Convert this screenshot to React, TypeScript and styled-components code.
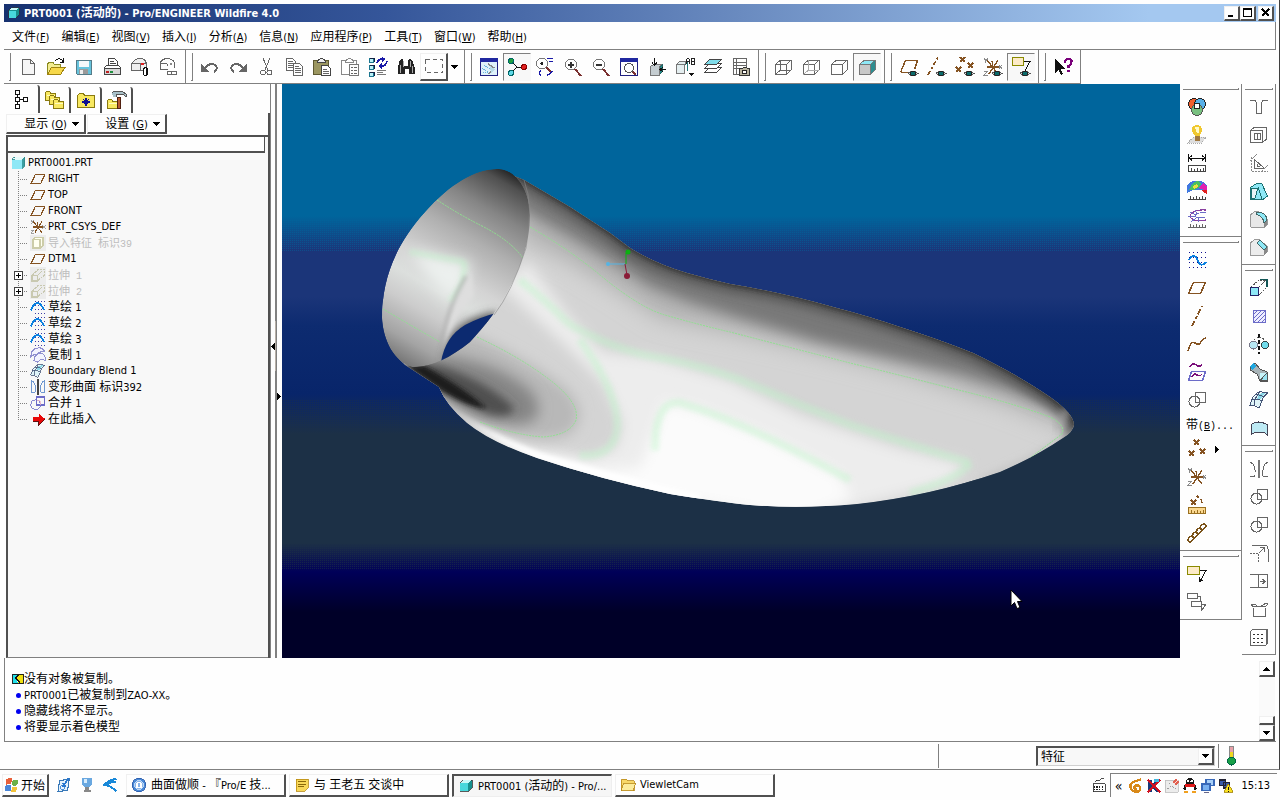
import React from "react";
import styled, { createGlobalStyle, css } from "styled-components";

const LATIN = '"DejaVu Sans Condensed", "Noto Sans CJK SC", sans-serif';
const CJK = '"Noto Sans CJK SC", sans-serif';
const GREY = "#808080";
const DARK = "#505050";
const LINE = "#666";
const BROWN = "#855322";
const CYAN = "#8ee8f6";
const NAVY = "#1818a8";
const LILAC = "#6c6cc8";

const Global = createGlobalStyle`
  * { box-sizing: border-box; }
  body { margin: 0; background: #fefefe; color: #000; font: 11px/16px ${LATIN}; }
  button, select { font: inherit; color: inherit; }
`;

/* ---------- text ---------- */

const Han = styled.span`
  font-family: ${CJK};
  font-size: 12px;
`;

const Mixed = ({ children }: { children: string }) => (
  <>
    {children.split(/([\u3000-\u9fff]+)/).map((part, i) =>
      i % 2 ? <Han key={i}>{part}</Han> : <React.Fragment key={i}>{part}</React.Fragment>
    )}
  </>
);

/* ---------- icons ---------- */

const L = (d: string, c = LINE, w = 1, f = "none", dash?: string) => (
  <path d={d} stroke={c} strokeWidth={w} fill={f} strokeDasharray={dash} />
);
const F = (d: string, f: string) => <path d={d} fill={f} />;
const C = (x: number, y: number, r: number, f = "none", s = "none") => (
  <circle cx={x} cy={y} r={r} fill={f} stroke={s} />
);

const eye = (
  <>
    {L("M9 16.500 q5 -5 10 0 q-5 5 -10 0", "#555", 1, "#ddd")}
    {C(14, 16.5, 2.4, "#0a6a6a", "#222")}
  </>
);
const magnifier = (
  <>
    {L("M12 12 L18 19", "#7a3030", 2)}
    {C(8, 7.500, 5.500, "#fff", "#777")}
  </>
);
const ruler = (c: string, f: string) => (
  <>
    {L("M1.500 12.500h17v6h-17z", c, 1, f)}
    {L("M4.500 15v3M7.500 16v2M10.500 15v3M13.500 16v2M16.500 15v3", c)}
  </>
);
const sketchDots = L("M2 2.500h17M2 7.500h17M2 12.500h17M2 17.500h17", "#101090", 1, "none", "1 3");
const cubeWire = "M2.500 7.500h11v10h-11zM2.500 7.500l5-4.500h10.500l-4.500 4.500M18 3v10l-4.500 4.500";
const folder = (x: number, y: number) => (
  <g transform={`translate(${x} ${y})`}>
    {L("M.5 9.500v-8l1-1h3l1 1.500h5v7.500z", "#8a7a10", 1, "#f8e860")}
    {L("M1.500 4h8", "#fffbc0")}
  </g>
);
const mergeRings = (
  <>
    {L("M8.500 2.500h10v10h-10z")}
    {C(7.500, 11.500, 5.500, "none", LINE)}
  </>
);
const link = (x: number, y: number) => (
  <ellipse cx={x} cy={y} rx="3.600" ry="2.200" transform={`rotate(-45 ${x} ${y})`} fill="none" stroke="#7a5218" strokeWidth="1.400" />
);
const smallX = (x: number, y: number, c = BROWN) => L(`M${x} ${y}l5 5m0-5l-5 5`, c, 1.5);
const csys = (
  <>
    {L("M4 3l11 14M15 3L6 17M10 10h6M4 10h6M10 10L9 4", BROWN, 1.4)}
    {L("M1 1l2 3m2-3l-3 5M16 8l3 4m0-4l-3 4M1 14h4l-4 4h4", "#888")}
  </>
);
const block = (
  <>
    {L("M2.500 6.500l4-4h11v10l-4 4h-11z", "#333", 1, "#18908e")}
    {F("M3 6.500h10v10h-10z", "#48d8dc")}
    {F("M3.500 6l3-3h10l-3 3z", "#c8f8f8")}
  </>
);

const icons: Record<string, React.ReactNode> = {
  new: <>{L("M4.500 2.500h8l4 4v11h-12z", LINE, 1, "#f6f6f6")}{L("M12.500 2.500v4h4")}</>,
  open: (
    <>
      {L("M1.500 17v-10l1.500-1.500h4l1.500 2h6v3", "#8a8a20", 1, "#f2ec90")}
      {L("M1.500 17.500l4-7h13.500l-4.500 7z", "#a08410", 1, "#f6d84a")}
      {L("M9 4q3-4 7-1l1 1.500M17.500 1v4h-4", "#111")}
    </>
  ),
  save: (
    <>
      {L("M2.500 3.500h15v14h-14l-1-1z", "#557b88", 1, "#66c3dc")}
      {F("M5 4h10v6h-10z", "#f4f8fa")}
      {F("M5 12h9v5h-9z", "#9a9a9a")}
      {F("M6 13h3v4h-3z", "#eee")}
    </>
  ),
  print: (
    <>
      {L("M6.500 8.500v-7h6l3 3v4z", "#444", 1, "#fff")}
      {L("M8 4.500h4M8 6.500h6M2.500 10.500l2-2h12l2 2v7h-16z", "#444", 1, "none")}
      {F("M3 11h15v6h-15z", "#d8d8d8")}
      {F("M4 14h3v2h-3z", "#c02020")}
      {F("M8 14h3v2h-3z", "#209040")}
      {L("M3 11.500h15", "#444")}
    </>
  ),
  mail: (
    <>
      {L("M1.500 13.500v-7l4-4q5-2 9 0l2 4v7z", LINE, 1, "#eee")}
      {L("M1.500 6.500h9l5 0M10.500 13v-6")}
      {F("M11 6h3v2h-3z", "#e02020")}
      {L("M13.500 11.500q2-2 3.500 0v6q-2 2-3.500 0z", "#111", 1.4, "#fff")}
    </>
  ),
  mailLink: (
    <>
      {L("M2.500 12.500v-6q0-4 6-5q6 0 8 4v5M2.500 6.500h6q2 1 1 3M2.500 12.500h7")}
      {F("M12 6h2v2h-2z", "#888")}
      {L("M9.500 14.500h4v3h-4zM13.500 14.500h5v3h-5z", LINE, 1.400, "#fff")}
    </>
  ),
  undo: <>{F("M1 6v9h8z", LINE)}{L("M5 11q5-6 10-3q4 4-1 7", LINE, 2)}</>,
  redo: <g transform="translate(20 0) scale(-1 1)">{F("M1 6v9h8z", LINE)}{L("M5 11q5-6 10-3q4 4-1 7", LINE, 2)}</g>,
  cut: <>{L("M7 1l5 12M14 1l-5 12")}{C(7, 15.500, 2.500, "none", LINE)}{C(13.500, 15.500, 2.500, "none", LINE)}</>,
  copy: (
    <>
      {L("M2.500 1.500h6l3 3v9h-9z", LINE, 1, "#fff")}
      {L("M4 4.500h5M4 6.500h6M4 8.500h6M4 10.500h6")}
      {L("M9.500 6.500h6l3 3v9h-9z", LINE, 1, "#fff")}
      {L("M11 9.500h4M11 11.500h6M11 13.500h6M11 15.500h6")}
    </>
  ),
  paste: (
    <>
      {L("M1.500 3.500h15v14h-15z", "#5d5830", 1, "#9b9660")}
      {L("M5.500 5.500l1-3h1l1-1.500h2l1 1.500h1l1 3z", "#444", 1, "#eee")}
      {L("M9.500 8.500h6l3 3v7h-9z", "#444", 1, "#fff")}
      {L("M11 12.500h4M11 14.500h6M11 16.500h6")}
    </>
  ),
  pasteSpecial: (
    <>
      {L("M1.500 3.500h15v14h-15z", "#888", 1, "#fff")}
      {L("M5.500 5.500l1-3h1l1-1.500h2l1 1.500h1l1 3z", "#888", 1, "#fff")}
      {L("M9.500 7.500h9v11h-9z", "#777", 1, "#fff")}
      {L("M11 10.500h2m1 0h3M11 13.500h2m1 0h3M11 16.500h2m1 0h3")}
    </>
  ),
  regen: (
    <>
      {[1, 8, 15].map((y) => <g key={y}>{L(`M1.500 ${y}.500h4v4h-4z`, "#1b7690", 1, "#baf0f8")}{L(`M2 ${y}h4.500v4`, "#124")}</g>)}
      {L("M9 6q1-4 5-4M19 4q-1 5-5 5", NAVY, 1.600)}
      {F("M14 0l4 2l-4 3zM14 6l-4 3l4 3z", NAVY)}
      {L("M9 13.500h9M9 15.500h6M9 17.500h9", "#777")}
    </>
  ),
  find: (
    <>
      {F("M3 5l2-3h2l1 3v4h4v-4l1-3h2l2 3l2 6v6h-6v-5h-4v5h-7v-6z", "#222")}
      {L("M4.500 8v8M7.500 4v6M14.500 4v6M16.500 9v7", "#aaa")}
    </>
  ),
  marquee: L("M1.500 3.500h17v13h-17z", LINE, 1, "none", "4 3"),
  repaint: (
    <>
      {L("M1.500 1.500h17v17h-17z", "#202080", 1, "#dff2fa")}
      {F("M1 1h18v4h-18z", "#2028a0")}
      {L("M3 11l8 5M5 8l6 4M4 15l5 1", "#67b4dd", 1, "none", "1 1")}
      {L("M9 7l6 4l-5 6", "#888", 1.400)}
      {F("M11 9l5 3l-4 5z", "#b8dce8")}
    </>
  ),
  spin: (
    <>
      {L("M4 4l6 6h7M10 10l-6 6", "#111")}
      {C(4, 4, 2.500, "#20a040", "#066")}
      {C(17, 10, 2.500, "#e02020", "#800")}
      {C(4, 16, 2.500, "#60d8e8", "#066")}
    </>
  ),
  orient: (
    <>
      {L("M11 10 L17 16", "#7a3030", 2)}
      {C(7, 6.500, 5.500, "#fff", "#777")}
      {C(7, 6.500, 1.500, "#222")}
      {L("M12 1.500h6M14 4.500h4M6 13q-3 3 0 6M12 18q3 0 5-4", NAVY, 1.400)}
    </>
  ),
  zoomIn: <>{magnifier}{L("M5 7.500h6M8 4.500v6", "#333", 2)}</>,
  zoomOut: <>{magnifier}{L("M5 7.500h6", "#333", 2)}</>,
  refit: (
    <>
      {L("M1.500 1.500h17v17h-17z", "#202080", 1, "#fff")}
      {F("M1 1h18v4h-18z", "#2028a0")}
      {L("M13 14l4 4", "#7a3030", 2)}
      {C(10, 11, 4.500, "#fff", "#555")}
    </>
  ),
  reorient: (
    <>
      {L("M3.500 9.500l3-2h8l-2 2.500v8h-9z", "#777", 1, "#c4ccd0")}
      {L("M13 10l2-2v7l-2 2", "#266", 1, "#288")}
      {L("M7.500 1v7M5 5.500l2.500 3l2.500-3M19 12.500h-6M16 10l-3 2.500l3 2.500", "#111")}
    </>
  ),
  views: (
    <>
      {L("M1.500 7.500l3-3h7l-2 3v9h-8zM1.500 7.500h8", "#777", 1, "#e4eef0")}
      {L("M10.500 8l2-3v9", "#277", 1)}
      {L("M11.500 7v-4l1-2h1l1 2v4M11.500 4.500h3M16.500 1v6h3v-6h-3M16.500 4h3", "#222")}
      {F("M14 16h5l-2.500 3z", "#111")}
    </>
  ),
  layers: (
    <>
      {[10, 6, 2].map((y) => <g key={y}>{L(`M1.500 ${y + 5}.500l5-5h12l-5 5z`, "#444", 1, y === 2 ? "#7fdcea" : "#fff")}</g>)}
    </>
  ),
  viewMgr: (
    <>
      {L("M2.500 1.500h13v16h-13zM2.500 5.500h13M2.500 8.500h13M2.500 11.500h13M5.500 1.500v16", LINE, 1)}
      {L("M8.500 11.500h3l1-1h3l1 1h2v7h-10z", "#333", 1, "#b8b4a0")}
      {C(13.500, 15, 2, "#fff", "#222")}
    </>
  ),
  wire: <>{L(cubeWire)}{L("M7.500 3v10h10.500M7.500 13l-5 4.500")}</>,
  hiddenLine: <>{L(cubeWire)}{L("M7.500 3v10h10.500M7.500 13l-5 4.500", "#aaa")}</>,
  noHidden: L(cubeWire),
  shaded: (
    <>
      {F("M2.500 7.500h11v10h-11z", "#c8c8c8")}
      {F("M2.500 7.500l5-4.500h10.500l-4.500 4.500z", CYAN)}
      {F("M13.500 7.500l4.500-4.500v10l-4.500 4.500z", "#2d8d90")}
      {L(cubeWire, "#777")}
    </>
  ),
  planeEye: <>{L("M1.500 15.500l5-12h12l-3 9M1.500 15.500h7", BROWN, 1.400)}{eye}</>,
  axisEye: <>{L("M1 18L11 0", BROWN, 1.600, "none", "5 2 2 2")}{eye}</>,
  pointEye: <>{smallX(5, 0)}{smallX(1, 10)}{smallX(13, 6)}{eye}</>,
  csysEye: <>{csys}{eye}</>,
  noteEye: (
    <>
      {L("M1.500 .5h11v8h-11z", "#8a8a00", 1.400, "#fdebc8")}
      {L("M13 4.500h6l-5 9", "#111")}
      {eye}
    </>
  ),
  help: (
    <>
      {F("M2 2v14l3.500-3l2.500 5l2-1l-2.500-5h4.500z", "#111")}
      {L("M12 6q0-4 3.500-4q3.500 0 3 3q0 2-3 4v2M15.500 12.500v2.500", "#7a007a", 2.200)}
    </>
  ),
  modelTree: L("M4.500 1.500h4v4h-4zM4.500 8.500h4v4h-4zM4.500 15.500h4v4h-4zM12.500 8.500h4v4h-4zM6.500 6v2M6.500 13v2M9 10.500h3", "#111"),
  folders: <>{folder(0, 1)}{folder(4, 5)}{folder(8, 9)}</>,
  favorites: (
    <>
      {L("M1.500 17.500v-12l2-2h4l1 2h9.500v12z", "#8a7a10", 1, "#f8e860")}
      {L("M10 8v8M6 12h8M7.500 9.500l5 5M12.500 9.500l-5 5", "#101090", 1.200)}
    </>
  ),
  tools: (
    <>
      {folder(0, 9)}
      {F("M5 2l3-1.500h7l4 3v3l-3-1.500h-6l-1 2h-3z", "#a8c0c8")}
      {L("M5 2.500l3-1.500h7l4 3v2.500l-3-2h-6l-1 2.500", "#555")}
      {L("M10.500 7h3v11.500h-3z", "#502010", 1, "#b85a30")}
    </>
  ),
  plane: L("M1.500 15.500l5-11h12l-5 11z", BROWN, 1.500),
  axis: L("M5 20L15 0", BROWN, 1.800, "none", "6 2 3 2"),
  curve: L("M1 17q3-11 7-8q4 3 6-1q2-4 5-4", BROWN, 1.400),
  csys,
  sketch: <>{sketchDots}{L("M2 10q5-9 9 1q3 7 8 1", "#0a80e0", 1.800)}</>,
  sketchArc: <>{sketchDots}{L("M1 14q8-18 17 0", "#0a80e0", 2.200)}</>,
  offset: <>{L("M3 5q3-5 6-2q4 3 6-1", "#7a107a", 1.400)}{L("M1.500 18.500l3-9h14l-3 9z", LILAC, 1.400)}{L("M5 15q3-5 5-2q3 2 5-1", "#7a107a", 1.400)}</>,
  merge: mergeRings,
  colors: (
    <>
      {C(7, 7, 5.500, "#f06030", "#222")}
      {C(13, 7, 5.500, "#58b0e8", "#222")}
      {C(10, 13, 5.500, "#78c080", "#555")}
      {C(10, 9, 3, "#fff", "#222")}
    </>
  ),
  bulb: (
    <>
      {L("M1 18l5-6h13l-4 6z", "#aaa", 1, "#ddd", "1 1")}
      {F("M10 0q5 0 5 5q0 3-2.500 6h-4.500q-3-3-3-6q0-5 5-5z", "#f0c830")}
      {F("M8 2h4v6h-2z", "#fffbc8")}
      {F("M8 11h5v5h-5z", "#a07840")}
    </>
  ),
  measure: <>{L("M1.500 1v8M18.500 1v8M2 5h16M5 2.500l-3 2.500l3 2.500M15 2.500l3 2.500l-3 2.500", "#111")}{ruler("#444", "#fff")}</>,
  analysis: (
    <>
      {F("M0 13v-8q4-6 10-6q6 0 10 6v8q-4-5-10-4q-6-1-10 4z", "#4078e0")}
      {F("M2 9q4-9 9-9l3 3q-2 5-8 6z", "#48c060")}
      {F("M6 6q2-4 5-2q0 3-4 4z", "#e8e040")}
      {F("M12 7l4-5l4 4v4z", "#e020b0")}
      {F("M14 9h6v4l-5-3z", "#e02020")}
      {L("M1 18.500h18M3.500 15v3M6.500 16v2M9.500 15v3M12.500 16v2M15.500 15v3M18.500 16v2", "#444")}
    </>
  ),
  curvature: (
    <>
      {L("M19 1q-14-1-16 6q1 6 16 4", "#8a40a0", 1.200)}
      {L("M19 4q-10-1-11 3q1 3 10 1M3 3l6 3M1 7l7 1M4 13l5-4M11 13l1-4M8 1l2 4", LILAC)}
      {L("M1 18.500h18M3.500 15v3M6.500 16v2M9.500 15v3M12.500 16v2M15.500 15v3M18.500 16v2", "#666")}
    </>
  ),
  points: <>{smallX(7, 1)}{smallX(2, 12)}{smallX(13, 10)}</>,
  pointRuler: <>{smallX(4, 5)}{L("M10 1l2 2M14 4l1 4", BROWN, 1.500)}{ruler("#9a7020", "#fbd890")}</>,
  chain: <>{link(4, 16)}{link(8, 12)}{link(12, 8)}{link(16, 4)}</>,
  note: <>{L("M.5 2.500h12v8h-12z", "#8a8a00", 1.400, "#fdebc8")}{L("M13 6.500h6l-6 11M12 13v5l4-2", "#111")}</>,
  notes: L("M.5 1.500h10v5h-10zM4.500 9.500h10v5h-10zM11 4h3l-1 5M15 12h4l-4 6M14 15v4"),
  hole: <>{L("M1 3.500h5l1.500 2v10.500h5v-10.500l1.500-2h5", LINE)}</>,
  shell: L("M1.500 5.500h12v12h-12zM1.500 5.500l4-3.500h12v12l-4 3.500M5.500 8.500h6v6h-6zM8.500 8.500v6"),
  rib: <>{L("M5.500 6.500v9h10zM8.500 11v2h2")}{L("M2 4v14.500h17M1 8l7-7M13 18l6-6", "#888", 1, "none", "2 1")}</>,
  draft: <>{L("M1.500 6.500l7-4.500l4 0l6 13l-4 3h-13z", "#1a7070", 1, CYAN)}{L("M2 7h7l-3 10h-4zM9 6l4 12", "#1a7070", 1, "#e8f4f6")}</>,
  round: <>{L("M1.500 18v-12l4-3.500q11 0 12.500 8v5l-3 3z", "#999", 1, "#e8e8e8")}{L("M7 3q11 0 11 9l-3 2q-1-7-8-9z", "#466", 1, CYAN)}{F("M15 14l3-2v4l-3 2z", "#888")}</>,
  chamfer: <>{L("M1.500 18v-12l4-3.500h5l7.500 7v5l-3 3.500z", "#999", 1, "#ececec")}{L("M8 6l3-3l7 7l-3 3z", "#466", 1, CYAN)}{F("M15 13l3-2v4l-3 3z", "#888")}</>,
  extrude: <>{L("M1.500 9.500h8v8h-8z", "#226", 1, CYAN)}{L("M2 9l8-7h8v7l-8 8M10 9l7-7", "#555", 1, "none", "2 1")}{L("M11 1.500h7v7", "#155", 1.400)}</>,
  extrudeFaint: <>{L("M2.500 10.500h7v7h-7z", "#c8c8b0", 1.500)}{L("M3 10l7-7h8v7l-8 7M10 10l7-7", "#c8c8b0", 1.500, "none", "3 1")}</>,
  importFaint: L("M3.500 5.500h9v11h-9zM4 5l3-2h9v10l-3 3", "#cccca8", 2, "#fffff0"),
  fill: <>{L("M4.500 4.500h12v12h-12z", LILAC, 1.400, "#eeeeff")}{L("M5 8l3-3M5 12l7-7M5 16l11-11M9 16l7-7M13 16l3-3", LILAC)}</>,
  revolve: <>{L("M10 0v20", "#111", 1.400, "none", "4 2")}{C(4.500, 11, 4, "#b8e8f4", "#778")}{C(16, 11, 3.500, "#70dcec", "#344")}{L("M5 6q5-5 11 0", "#555", 1, "none", "2 1")}</>,
  sweep: <>{L("M2 4l4-3l5 6l7 3v9h-7l-3-7l-7-4z", "#555", 1, "#a8b4b8")}{F("M1 4l4-3l2 3l-4 4z", "#20a8e0")}{F("M11 18v-7h7v7z", "#c8f4fa")}{L("M11 18.500l7.500-8v8z", "#555", 1, "#9ae4f2")}</>,
  boundary: (
    <>
      {F("M4 9q4-6 8-6l7-1q-5 4-6 7l-3 8q-4-3-9-2z", "#dff4f8")}
      {F("M10 4l8-2q-5 4-6 7l-4 0z", "#8cd8e8")}
      {L("M1 15q3-9 4-9q4-5 8-4l6 1q-5 3-6 8l-3 7q-4-3-9-3zM3 10q6-2 10 1M6 5q6-1 8 2M5 15q0-6 5-12", "#457")}
    </>
  ),
  style: L("M2 16.500v-10q7-5 16 0v10q-3-3-7-2q-5-1-9 2z", "#445", 1, "#bdeaf4"),
  mirror: <>{L("M10 1v18", "#777", 1.400)}{L("M1 3q6 2 5 14h-5M19 3q-6 2-5 14h5")}</>,
  mirrorBlue: <>{L("M10 0v20", "#444", 1.400)}{L("M1.500 17v-15q6 2 5.500 12l-1 3zM18.500 17v-15q-6 2-5.500 12l1 3z", "#7098d0", 1.400)}</>,
  copySurf: <>{L("M1 12q0-10 10-11q6 0 7 5q-7-1-10 4q-5-1-7 2zM5 17q0-8 8-9q5 0 6 5v4q-6-4-9 2z", "#9090d0", 1.400, "#f4f4ff")}</>,
  mergeBlue: <>{C(7, 12, 6, "none", LILAC)}{L("M8.500 2.500h10v10h-10z", LILAC, 1.400)}{L("M9 7h4v5", "#f0b8c8")}</>,
  trim: <>{L("M3 2.500h13q3 0 3 3v13", LINE)}{L("M1 10.500h8.500v9", LINE, 1, "none", "2 1")}{L("M10 10l5-5M11 4.500h4v4", LINE)}</>,
  extend: L("M1 3.500h17v13h-17M9.500 3.500v13M11 10.500h5M13.500 8l2.500 2.500l-2.500 2.500"),
  thicken: L("M4.500 8.500v9h12v-9M2 5l2 3q6-2 12 0l3-3M2 5h4q4 5 8 1q2-2 5-2"),
  patternGrid: <>{L("M1.500 4.500l2-2h15v14l-2 2h-15z", LINE, 1, "#fff")}{L("M17.500 3v14", LINE, 2)}{L("M4 7.500h12M4 11.500h12M4 15.500h12", "#333", 1.600, "none", "2 2")}</>,
  part: <>{L("M2.500 5.500l3-3h13v11l-3 3.500h-13z", "#388", 1, "#3b9ea2")}{F("M3 6h12v11h-12z", CYAN)}{F("M3 5.500l3-2.500h11l-2 3z", "#e6fafa")}</>,
  insert: <>{F("M4 8h7v-5l8 7l-8 8v-5h-7z", "#e80808")}{L("M4 13h7v5l8-8", "#601010", 1.400)}</>,
  block,
  windows: (
    <>
      {F("M3 3q4-3 7-1l-1 7q-4-1-7 1z", "#e8603a")}
      {F("M11 3q4 2 7 0l-1.500 7q-3 2-7 0z", "#6cb048")}
      {F("M2 11q4-2 7 0l-1 7q-4-2-7 0z", "#4a86d8")}
      {F("M10 12q3 2 7 0l-2 7q-3 1-6-1z", "#f2c23a")}
    </>
  ),
  desktop: <>{L("M4.500 4.500l12-2l-2 14l-12 2z", "#3878b8", 1.400, "#e4f2fc")}{L("M7 8h6M7 11h6M16 1l-8 12", "#2878d0", 2)}{C(8, 13, 3, "none", "#2878d0")}</>,
  media: <>{F("M4 1h12v9q-6 6-12 0z", "#6aa8e0")}{F("M6 3h4v5h-4z", "#d8ecfc")}{F("M8 13h4v3h-4zM6 16h9v3h-9z", "#888")}</>,
  bird: L("M18 2Q6 5 3 10Q10 10 18 18M4 10Q10 6 17 6", "#1888d8", 2.600),
  browser: <>{C(10, 10, 8.500, "#4a8ad8", "#2858a8")}{C(10, 10, 5.500, "#88b4ea", "#d8e8fa")}{L("M7.500 13v-5q2.500-2 5 0v5z", "#fff", 1.400)}</>,
  chat: <>{L("M2.500 2.500h15v11l-4 4h-11z", "#b88a10", 1, "#f8d858")}{L("M5 6h10M5 9h10M5 12h7", "#8a6808", 1.400)}</>,
  folderTask: <>{L("M1.500 17v-13l2-1.500h4l2 2h8v12.500z", "#b88818", 1, "#f8d868")}{L("M1.500 17l3-9h15l-3 9z", "#b88818", 1, "#fcec9c")}</>,
  keyboard: <>{L("M2.500 8.500h15v10h-15z", "#222", 1, "#fff")}{L("M4 11.500h12M4 13.500h12M4 15.500h12", "#222", 1.400, "none", "1 1")}{L("M6 6q0-3 3-2q3 1 3-2h4", "#222")}</>,
  snail: <>{L("M16 2q-14 3-13 9q1 7 10 6q4-3 1-7q-4-2-6 1q0 4 3 3", "#d88818", 3)}</>,
  kaspersky: <>{F("M3 3h5v5l5-5h6l-7 7l7 8h-6l-5-6v6h-5z", "#183878")}{L("M2 2L18 18M18 2L2 18", "#d01020", 2)}{F("M10 1h6v4h-6z", "#40b8e0")}</>,
  noise: <>{L("M1.500 2.500h16v15h-16z", "#bbb", 1, "#ececec")}{L("M4 14l6-4l5 4M6 6l3 3", "#888", 1, "none", "2 2")}{C(15, 5, 3.500, "#e06050")}{L("M13 7l4-4", "#fff")}</>,
  penguin: <>{F("M10 0q5 0 5 6q4 5 3 9h-16q-1-4 3-9q0-6 5-6z", "#181818")}{F("M5 11h10v5q-5 4-10 0z", "#fff")}{F("M4 8h12v3h-12z", "#e01818")}{F("M2 16h6v3h-6zM12 16h6v3h-6z", "#f0a020")}{C(8, 4, 1.500, "#fff")}{C(12, 4, 1.500, "#fff")}</>,
  network: <>{L("M7.500 1.500h10v8h-10z", "#3868b8", 1.400, "#a8d0f8")}{L("M2.500 7.500h10v8h-10z", "#3868b8", 1.400, "#78b0f0")}{L("M5 18h6", "#668", 2)}</>,
  networkWarn: <>{L("M1.500 2.500h8v7h-8zM6.500 5.500h8v7h-8z", "#223", 1.400, "#3858a8")}{L("M13 7l6 11h-12z", "#a08000", 1, "#f8e020")}{L("M13 11v4M13 16v1", "#111", 1.500)}</>,
  light: <>{F("M7 0h5v6h-5z", "#e8a0a8")}{F("M7 6h5v6h-5z", "#f0d820")}{L("M7.500 .5h4v12h-4z", "#888")}{C(9.500, 15, 4, "#18a048", "#064")}</>,
  conflict: <>{F("M1 2h9l-4 6l5 10h-10z", "#20e0e8")}{F("M10 2h9v16h-7l-5-8z", "#f0e010")}{L("M1 2h18v16h-18z", "#111", 1.500)}{L("M11 3l-5 5l6 6v4", "#111", 2)}</>,
};

const Svg = styled.svg<{ $size: number }>`
  flex: none;
  display: block;
  width: ${(p) => p.$size}px;
  height: ${(p) => p.$size}px;
  shape-rendering: crispEdges;
`;
const Icon = ({ name, size = 20 }: { name: string; size?: number }) => (
  <Svg $size={size} viewBox="0 0 20 20" fill="none" aria-hidden="true">
    {icons[name]}
  </Svg>
);
const arrows = {
  down: "M0 2h7v1h-1v1h-1v1h-1v1h-1v-1h-1v-1h-1v-1h-1z",
  up: "M0 6h7v-1h-1v-1h-1v-1h-1v-1h-1v1h-1v1h-1v1h-1z",
  left: "M4 0v7h-1v-1h-1v-1h-1v-1h-1v-1h1v-1h1v-1h1v-1z",
  right: "M0 0v7h1v-1h1v-1h1v-1h1v-1h-1v-1h-1v-1h-1v-1z",
};
const Arrow = ({ d }: { d: keyof typeof arrows }) => {
  const side = d === "left" || d === "right";
  return (
    <svg width={side ? 4 : 7} height={side ? 7 : 8} aria-hidden="true">
      <path d={arrows[d]} fill="#000" />
    </svg>
  );
};

/* ---------- window frame ---------- */

const Page = styled.div`
  min-height: 100vh;
  display: flex;
  flex-direction: column;
`;
const AppWindow = styled.main`
  flex: 1;
  display: flex;
  flex-direction: column;
  padding: 4px 3px 0 4px;
  border-right: 1px solid #404040;
  border-bottom: 1px solid ${GREY};
`;
const TitleBar = styled.header`
  height: 18px;
  display: flex;
  align-items: center;
  padding: 0 2px 0 3px;
  gap: 3px;
  color: #fff;
  background: linear-gradient(90deg, #16316f, #35569a 30%, #6a8bc0 58%, #a4c8f0 90%);
`;
const Title = styled.h1`
  flex: 1;
  margin: 0;
  font-size: 11px;
  font-weight: bold;
  white-space: nowrap;
`;
const raised = css`
  background: #fefefe;
  border: 1px solid #f0f0f0;
  border-right: 2px solid ${DARK};
  border-bottom: 2px solid ${DARK};
`;
const CaptionGroup = styled.div`
  display: flex;
`;
const CaptionButton = styled.button`
  ${raised}
  width: 16px;
  height: 15px;
  padding: 0;
  display: grid;
  place-items: center;
  &:last-child { margin-left: 2px; }
`;
const MenuBar = styled.nav`
  height: 28px;
  display: flex;
  align-items: center;
  padding: 2px 2px 0;
  border-right: 1px solid ${GREY};
  border-bottom: 1px solid ${GREY};
`;
const MenuButton = styled.button`
  border: 0;
  background: none;
  padding: 0 6px;
  white-space: nowrap;
`;

/* ---------- toolbars ---------- */

const ToolbarRow = styled.div`
  display: flex;
  height: 34px;
`;
const ToolGroup = styled.div`
  display: flex;
  align-items: center;
  padding: 0 3px 0 5px;
  border-right: 1px solid ${GREY};
  border-bottom: 1px solid ${GREY};
`;
const Grip = styled.i`
  width: 2px;
  height: 28px;
  margin-right: 3px;
  border-right: 1px solid ${GREY};
  border-bottom: 1px solid ${GREY};
`;
const ToolButton = styled.button<{ $look?: "sunk" | "raised" }>`
  width: 28px;
  height: 28px;
  padding: 0;
  border: 1px solid transparent;
  background: none;
  display: grid;
  place-items: center;
  ${(p) => p.$look === "sunk" && css`background: #f8f8f8; border-top-color: ${GREY}; border-left-color: ${GREY};`}
  ${(p) => p.$look === "raised" && raised}
`;
const DropButton = styled.button`
  width: 13px;
  height: 28px;
  padding: 0;
  border: 0;
  background: none;
  display: grid;
  place-items: center;
`;
const SideColumn = styled.aside<{ $wide?: boolean }>`
  flex: none;
  width: ${(p) => (p.$wide ? 62 : 34)}px;
`;
const SideGroup = styled.div`
  display: flex;
  flex-direction: column;
  align-items: flex-start;
  padding: 4px 2px 3px 3px;
  border-right: 1px solid ${GREY};
  border-bottom: 1px solid ${GREY};
`;
const SideGrip = styled.i`
  align-self: stretch;
  height: 2px;
  margin-bottom: 3px;
  border-bottom: 1px solid ${GREY};
  border-right: 1px solid ${GREY};
`;
const SideLine = styled.div`
  display: flex;
  align-items: center;
  gap: 4px;
`;
const RibbonButton = styled.button`
  height: 21px;
  padding: 0 3px;
  border: 0;
  background: none;
  font: 10px/20px "Liberation Mono", ${CJK};
  white-space: nowrap;
`;

/* ---------- work area ---------- */

const WorkArea = styled.div`
  flex: 1;
  min-height: 574px;
  display: flex;
`;
const Navigator = styled.section`
  flex: none;
  width: 267px;
  display: flex;
  flex-direction: column;
  border-right: 1px solid ${GREY};
`;
const Tabs = styled.div`
  display: flex;
  align-items: flex-end;
  height: 29px;
`;
const Tab = styled.button<{ $active?: boolean }>`
  width: ${(p) => (p.$active ? 36 : 31)}px;
  height: ${(p) => (p.$active ? 28 : 26)}px;
  padding: 0;
  border: 0;
  border-right: 2px solid ${DARK};
  border-radius: 0 3px 0 0;
  background: none;
  display: grid;
  place-items: center;
`;
const TabPage = styled.div`
  flex: 1;
  display: flex;
  flex-direction: column;
  padding-left: 2px;
  border-right: 2px solid ${DARK};
`;
const ButtonRow = styled.div`
  display: flex;
  gap: 1px;
  padding: 1px 0;
`;
const TreeMenuButton = styled.button`
  ${raised}
  width: 80px;
  height: 20px;
  padding: 0 4px 0 16px;
  display: flex;
  align-items: center;
  justify-content: center;
  gap: 5px;
  white-space: nowrap;
`;
const TreePane = styled.div`
  flex: 1;
  background: #f8f8f8;
  border: 2px solid ${DARK};
  border-right: 0;
  border-bottom: 1px solid ${GREY};
`;
const TreeHead = styled.div`
  height: 16px;
  margin-right: 3px;
  background: #fefefe;
  border-right: 1px solid ${DARK};
  border-bottom: 2px solid ${DARK};
`;
const TreeList = styled.ul`
  list-style: none;
  margin: 0;
  padding: 2px 0 0 2px;
`;
const TreeRow = styled.li<{ $root?: boolean; $off?: boolean }>`
  display: flex;
  align-items: center;
  gap: 2px;
  height: 16px;
  padding-left: ${(p) => (p.$root ? 0 : 8)}px;
  white-space: nowrap;
  ${(p) => p.$off && css`
    color: #bdbdbd;
    font: 10px/14px "Liberation Mono", ${CJK};
    ${Han} { font-size: 11px; }
  `}
`;
const Guide = styled.span<{ $last?: boolean }>`
  position: relative;
  width: 10px;
  height: 16px;
  background:
    repeating-linear-gradient(${GREY} 0 1px, transparent 1px 2px) 0 0 / 1px ${(p) => (p.$last ? "9px" : "100%")} no-repeat,
    repeating-linear-gradient(90deg, ${GREY} 0 1px, transparent 1px 2px) 0 8px / 100% 1px no-repeat;
`;
const Expander = styled.button`
  position: absolute;
  left: -4px;
  top: 4px;
  width: 9px;
  height: 9px;
  padding: 0;
  border: 1px solid #444;
  background:
    linear-gradient(#000, #000) center / 5px 1px no-repeat,
    linear-gradient(#000, #000) center / 1px 5px no-repeat,
    #fff;
`;
const NodeBox = styled.span<{ $off?: boolean }>`
  width: 16px;
  height: 16px;
  background: ${(p) => (p.$off ? "#ececec" : "none")};
`;
const Splitter = styled.div`
  flex: none;
  width: 11px;
  display: flex;
`;
const SashColumn = styled.div<{ $side: "left" | "right" }>`
  width: ${(p) => (p.$side === "left" ? 6 : 5)}px;
  display: flex;
  flex-direction: column;
  justify-content: center;
  padding: ${(p) => (p.$side === "left" ? "0 0 50px" : "50px 0 0")};
  border-right: ${(p) => (p.$side === "left" ? `2px solid ${GREY}` : "0")};
`;
const SashButton = styled.button`
  height: 50px;
  width: 100%;
  padding: 0;
  border: 0;
  box-shadow: 1px 0 #b8b0a8;
  background: #fefefe;
  display: grid;
  place-items: center start;
`;
const Viewport = styled.section`
  flex: 1;
  min-width: 0;
  display: flex;
  background: linear-gradient(
    #00659c 0 23%, #1b3579 29%, #1b3579 37%, #0d2b70 42%, #08256a 54%,
    #1c3046 61%, #1c3046 80%, #000058 85%, #000028 92%
  );
`;
const Scene = styled.svg`
  display: block;
  width: 100%;
  height: 100%;
  min-height: 574px;
`;

/* ---------- messages and status ---------- */

const MessageArea = styled.section`
  display: flex;
  justify-content: space-between;
  height: 84px;
  border-left: 1px solid ${GREY};
  border-bottom: 1px solid ${GREY};
  padding-top: 3px;
`;
const MessageList = styled.ul`
  list-style: none;
  margin: 0;
  padding: 10px 0 0 7px;
`;
const Message = styled.li`
  display: flex;
  align-items: center;
  height: 16px;
`;
const MessageMark = styled.span`
  width: 12px;
  display: grid;
  place-items: center;
`;
const Bullet = styled.i`
  width: 5px;
  height: 5px;
  border-radius: 50%;
  background: #0000f0;
`;
const ScrollBar = styled.div`
  width: 16px;
  margin-right: 1px;
  display: flex;
  flex-direction: column;
  background: #fafafa;
`;
const ScrollButton = styled.button`
  ${raised}
  height: 16px;
  padding: 0;
  display: grid;
  place-items: center;
`;
const ScrollTrack = styled.div`
  flex: 1;
  display: flex;
  flex-direction: column;
  justify-content: flex-end;
`;
const ScrollThumb = styled.div`
  ${raised}
  height: 9px;
`;
const StatusBar = styled.footer`
  height: 27px;
  display: flex;
  justify-content: flex-end;
  align-items: center;
`;
const StatusCell = styled.div<{ $w: number }>`
  width: ${(p) => p.$w}px;
  height: 24px;
  display: flex;
  align-items: center;
  justify-content: flex-end;
  border-left: 1px solid ${GREY};
  padding: 0 3px;
`;
const LightCell = styled(StatusCell)`
  justify-content: flex-start;
`;
const FilterBox = styled.label`
  position: relative;
  width: 179px;
`;
const FilterSelect = styled.select`
  appearance: none;
  display: block;
  width: 100%;
  height: 20px;
  padding: 0 3px;
  border: 1px solid #d0d0d0;
  border-top: 2px solid ${DARK};
  border-left: 2px solid ${DARK};
  border-radius: 0;
  background: #f8f8f8;
  font: 12px/16px ${CJK};
`;
const FilterArrow = styled.span`
  ${raised}
  position: absolute;
  right: 1px;
  top: 2px;
  width: 16px;
  height: 17px;
  display: grid;
  place-items: center;
  pointer-events: none;
`;

/* ---------- taskbar ---------- */

const TaskBar = styled.footer`
  height: 30px;
  display: flex;
  align-items: center;
  padding: 0 3px 0 2px;
`;
const StartButton = styled.button`
  ${raised}
  width: 47px;
  height: 23px;
  padding: 0 1px;
  display: flex;
  align-items: center;
  gap: 1px;
  white-space: nowrap;
`;
const QuickLaunch = styled.div`
  display: flex;
  gap: 7px;
  padding: 0 8px 0 7px;
`;
const QuickButton = styled.button`
  padding: 0;
  border: 0;
  background: none;
`;
const TaskList = styled.div`
  flex: 1;
  display: flex;
  gap: 3px;
`;
const TaskButton = styled.button<{ $active?: boolean }>`
  ${raised}
  width: 160px;
  height: 23px;
  padding: 0 4px;
  display: flex;
  align-items: center;
  gap: 4px;
  white-space: nowrap;
  ${(p) => p.$active && css`
    background: #f6f6f6;
    border: 1px solid #eee;
    border-top: 2px solid ${DARK};
    border-left: 2px solid ${DARK};
  `}
`;
const Tray = styled.div`
  display: flex;
  align-items: center;
  height: 24px;
  margin-left: 3px;
  padding: 0 7px 0 4px;
  gap: 2px;
  border-top: 1px solid ${GREY};
  border-left: 1px solid ${GREY};
`;
const TrayMore = styled.button`
  padding: 0 4px 0 0;
  border: 0;
  background: none;
  font-size: 14px;
`;
const Clock = styled.time`
  margin-left: 5px;
`;

/* ---------- data ---------- */

const menus: [string, string][] = [
  ["文件", "F"], ["编辑", "E"], ["视图", "V"], ["插入", "I"], ["分析", "A"],
  ["信息", "N"], ["应用程序", "P"], ["工具", "T"], ["窗口", "W"], ["帮助", "H"],
];

type Tool = { icon: string; label: string; look?: "sunk" | "raised"; drop?: boolean };
const t = (icon: string, label: string, look?: Tool["look"], drop?: boolean): Tool => ({ icon, label, look, drop });

const toolbars: Tool[][] = [
  [t("new", "新建"), t("open", "打开"), t("save", "保存"), t("print", "打印"), t("mail", "发送邮件"), t("mailLink", "发送链接")],
  [t("undo", "撤消"), t("redo", "重做"), t("cut", "剪切"), t("copy", "复制"), t("paste", "粘贴"), t("pasteSpecial", "选择性粘贴"),
    t("regen", "再生"), t("find", "查找"), t("marquee", "选取框", "raised", true)],
  [t("repaint", "重画"), t("spin", "旋转中心", "sunk"), t("orient", "定向模式"), t("zoomIn", "放大"), t("zoomOut", "缩小"),
    t("refit", "重新调整"), t("reorient", "重定向"), t("views", "视图列表"), t("layers", "层"), t("viewMgr", "视图管理器")],
  [t("wire", "线框"), t("hiddenLine", "隐藏线"), t("noHidden", "无隐藏线"), t("shaded", "着色", "sunk")],
  [t("planeEye", "基准平面显示"), t("axisEye", "基准轴显示"), t("pointEye", "基准点显示"), t("csysEye", "坐标系显示"), t("noteEye", "注释显示", "sunk")],
  [t("help", "上下文帮助")],
];

const leftSide: Tool[][] = [
  [t("colors", "外观"), t("bulb", "光源"), t("measure", "测量"), t("analysis", "曲面分析"), t("curvature", "曲率")],
  [t("sketch", "草绘"), t("plane", "平面"), t("axis", "轴"), t("curve", "曲线"), t("offset", "偏移"), t("merge", "合并"), t("ribbon", "带"),
    t("points", "点", undefined, true), t("csys", "坐标系"), t("pointRuler", "分析点"), t("chain", "链接")],
  [t("note", "注释"), t("notes", "注释集")],
];
const rightSide: Tool[][] = [
  [t("hole", "孔"), t("shell", "壳"), t("rib", "筋"), t("draft", "拔模"), t("round", "倒圆角"), t("chamfer", "倒角")],
  [t("extrude", "拉伸"), t("fill", "填充"), t("revolve", "旋转"), t("sweep", "扫描"), t("boundary", "边界混合"), t("style", "造型")],
  [t("mirror", "镜像"), t("merge", "合并"), t("merge", "相交"), t("trim", "修剪"), t("extend", "延伸"), t("thicken", "加厚"), t("patternGrid", "阵列")],
];

type Node = { icon: string; text: string; off?: boolean; expand?: boolean };
const nodes: Node[] = [
  { icon: "plane", text: "RIGHT" },
  { icon: "plane", text: "TOP" },
  { icon: "plane", text: "FRONT" },
  { icon: "csys", text: "PRT_CSYS_DEF" },
  { icon: "importFaint", text: "导入特征 标识39", off: true },
  { icon: "plane", text: "DTM1" },
  { icon: "extrudeFaint", text: "拉伸 1", off: true, expand: true },
  { icon: "extrudeFaint", text: "拉伸 2", off: true, expand: true },
  { icon: "sketchArc", text: "草绘 1" },
  { icon: "sketchArc", text: "草绘 2" },
  { icon: "sketchArc", text: "草绘 3" },
  { icon: "copySurf", text: "复制 1" },
  { icon: "boundary", text: "Boundary Blend 1" },
  { icon: "mirrorBlue", text: "变形曲面 标识392" },
  { icon: "mergeBlue", text: "合并 1" },
  { icon: "insert", text: "在此插入" },
];

const messages = ["没有对象被复制。", "PRT0001已被复制到ZAO-XX。", "隐藏线将不显示。", "将要显示着色模型"];

const tasks = [
  { icon: "browser", text: "曲面做顺 - 『Pro/E 技..." },
  { icon: "chat", text: "与 王老五 交谈中" },
  { icon: "block", text: "PRT0001 (活动的) - Pro/...", active: true },
  { icon: "folderTask", text: "ViewletCam" },
];

/* ---------- model ---------- */

const topEdge =
  "L524 180 L570 207 L610 233 L630 248 Q656 264 687 273 Q708 279 730 284 Q780 292 833 307 Q868 316 900 327 Q938 339 973 353 Q1020 376 1050 397 Q1074 414 1074 425";
const body =
  `M497 169 ${topEdge} Q1073 432 1063 438 Q1035 457 1000 472 Q930 496 857 504 Q800 509 750 505 Q720 502 670 494 Q600 479 537 458 Q490 442 467 423 Q446 405 439 387 L405 365 Q378 340 383 300 Z`;
const rim =
  "M497 169 C515 168 530 190 530 215 C530 260 505 305 470 342 C450 358 430 368 412 367 C394 362 383 340 382 318 C382 280 395 245 425 212 C450 184 475 169 497 169 Z";

const Model = () => (
  <Scene viewBox="282 84 898 574" preserveAspectRatio="xMidYMid meet" role="img" aria-label="着色曲面模型">
    <defs>
      <clipPath id="bodyClip"><path d={body} /></clipPath>
      <clipPath id="rimClip"><path d={rim} /></clipPath>
      <linearGradient id="inner" gradientUnits="userSpaceOnUse" x1="512" y1="172" x2="402" y2="362">
        <stop offset="0" stopColor="#222" />
        <stop offset="0.060" stopColor="#505050" />
        <stop offset="0.200" stopColor="#858585" />
        <stop offset="0.360" stopColor="#b0b0b0" />
        <stop offset="0.540" stopColor="#d4d4d4" />
        <stop offset="0.640" stopColor="#dcdfdd" />
        <stop offset="0.750" stopColor="#cccccc" />
        <stop offset="0.900" stopColor="#a4a4a4" />
        <stop offset="1" stopColor="#777" />
      </linearGradient>
      <pattern id="ditherBlue" patternUnits="userSpaceOnUse" width="2" height="2">
        <rect width="1" height="1" fill="#00659c" />
      </pattern>
      <pattern id="ditherSlate" patternUnits="userSpaceOnUse" width="2" height="2">
        <rect width="1" height="1" fill="#1c3046" />
      </pattern>
      {[2, 4, 7, 11].map((n) => (
        <filter key={n} id={`soft${n}`} x="-20%" y="-20%" width="140%" height="140%">
          <feGaussianBlur stdDeviation={n} />
        </filter>
      ))}
    </defs>

    <rect x="282" y="220" width="898" height="32" fill="url(#ditherBlue)" opacity="0.500" />
    <rect x="282" y="400" width="898" height="30" fill="url(#ditherSlate)" opacity="0.500" />
    <rect x="282" y="546" width="898" height="24" fill="url(#ditherSlate)" opacity="0.600" />

    <g clipPath="url(#bodyClip)">
      <path d={body} fill="#d4d4d4" />
      <path d="M510 170 L1090 170 L1090 440 L1060 425 L1000 402 L900 372 L820 352 L740 334 L660 318 L620 292 L570 262 L520 238 Z" fill="#b0b0b0" filter="url(#soft11)" />
      <path d="M510 160 L1090 160 L1090 425 L1055 409 L1010 390 L960 374 L900 360 L820 342 L740 318 L690 302 L650 286 L610 260 L570 236 L520 208 Z" fill="#787878" filter="url(#soft7)" />
      <path d={`M520 150 ${topEdge} L1100 400 L1000 150 Z`} fill="#4c4c4c" stroke="#5c5c5c" strokeWidth="18" filter="url(#soft4)" />
      <path d={`M510 172 ${topEdge}`} fill="none" stroke="#262626" strokeWidth="3" filter="url(#soft2)" />

      <path d="M500 285 L528 262 L570 318 L603 352 L653 357 L730 380 L800 415 L900 448 L968 464 L948 484 L860 506 L800 520 L600 490 L440 400 L480 426 L540 452 L590 458 L616 447 L622 424 L604 385 L570 350 Z" fill="#ededed" filter="url(#soft7)" />
      <path d="M664 402 L700 410 L767 437 L838 474 L852 498 L800 520 L560 480 L470 432 L520 448 L600 470 L640 468 L655 430 Z" fill="#fbfbfb" filter="url(#soft7)" />
      <path d="M440 390 Q470 428 540 456 Q620 480 700 498" fill="none" stroke="#fff" strokeWidth="7" filter="url(#soft2)" />

      <path d="M400 350 L470 334 Q530 360 565 388 Q590 412 572 432 Q548 446 505 432 L470 420 L430 395 Z" fill="#b8b8b8" filter="url(#soft7)" />
      <path d="M400 355 L450 356 Q505 366 532 392 Q548 418 524 424 Q495 426 465 412 L420 385 Z" fill="#858585" filter="url(#soft7)" />
      <path d="M405 362 L440 366 Q490 383 514 408 Q512 420 486 413 L440 390 Z" fill="#505050" filter="url(#soft4)" />
      <path d="M405 365 L425 366 Q470 392 486 408 Q470 408 441 390 Z" fill="#1c1c1c" filter="url(#soft2)" />
      <path d="M1074 405 L1064 414 L1056 430" fill="none" stroke="#a8a8a8" strokeWidth="5" filter="url(#soft4)" />
      <path d="M1074 434 L1030 460 L980 482" fill="none" stroke="#bcbcbc" strokeWidth="5" filter="url(#soft4)" />

      <g fill="none" stroke="#8fe08f" strokeWidth="1" strokeDasharray="2 1">
        <path d="M530 227 Q570 250 600 275 Q640 308 665 315 Q700 325 730 332 Q800 350 850 363 Q900 375 950 388 Q1010 402 1050 417 Q1066 425 1062 434 L1030 458" />
        <path d="M477 337 Q520 357 550 380 Q580 403 576 420 Q570 435 543 437 Q515 435 480 422" />
      </g>
      <g fill="none" stroke="#b8f8c4" strokeWidth="8" strokeDasharray="1 1" opacity="0.700" filter="url(#soft2)">
        <path d="M520 280 Q545 300 570 325 Q620 352 660 358 Q700 365 740 380 Q800 405 850 425 Q920 448 970 463 Q960 478 910 493" />
        <path d="M580 340 Q620 395 617 430 Q612 458 580 455" />
        <path d="M655 450 Q655 400 680 403 Q740 420 850 480" />
      </g>
    </g>

    <g clipPath="url(#rimClip)">
      <path d={rim} fill="url(#inner)" />
      <path d="M408 250 L470 262 L466 285 L452 302 L430 280 Z" fill="#ecf0ee" filter="url(#soft7)" />
      <path d="M410 252 L465 262 L462 285 L450 302" fill="none" stroke="#b8f8c4" strokeWidth="6" strokeDasharray="1 1" opacity="0.700" filter="url(#soft2)" />
      <path d="M496 312 Q460 318 448 342 L442 362 L475 362 L500 330 Z" fill="#505050" filter="url(#soft4)" />
      <path d="M441 362 Q442 315 470 272 L474 296 Q450 322 443 350 Z" fill="#dedede" filter="url(#soft2)" />
      <path d="M441 358 Q443 315 466 276" fill="none" stroke="#9a9a9a" strokeWidth="2" filter="url(#soft2)" />
      <g fill="none" stroke="#8fe08f" strokeWidth="1" strokeDasharray="2 1">
        <path d="M437 200 Q460 215 480 225 Q510 240 523 258" />
        <path d="M383 309 Q410 325 440 342" />
      </g>
      <path d="M441 362 Q445 337 465 325 Q480 317 500 312 L470 345 Z" fill="#0c2a70" />
    </g>
    <path d="M524 180 Q534 205 526 248 Q512 292 494 315" fill="none" stroke="#888" opacity="0.600" />

    <path d="M626 264V253" stroke="#0bb010" strokeWidth="1" />
    <path d="M608 264H625" stroke="#55b4e4" strokeWidth="1" />
    <path d="M625 264L627 275" stroke="#8a1c38" strokeWidth="1" />
    <circle cx="628" cy="252" r="2.500" fill="#0bb010" />
    <circle cx="608" cy="264" r="2" fill="#55b4e4" />
    <circle cx="627" cy="276" r="3" fill="#8a1c38" />
    <path d="M1011 590v16l3.500-3.500l2.500 6l3-1l-2.500-6h4.500z" fill="#fff" stroke="#000" strokeWidth="1" />
  </Scene>
);

/* ---------- page ---------- */

const SideTools = ({ groups, wide }: { groups: Tool[][]; wide?: boolean }) => (
  <SideColumn $wide={wide}>
    {groups.map((group, i) => (
      <SideGroup key={i}>
        <SideGrip />
        {group.map((tool, j) =>
          tool.icon === "ribbon" ? (
            <RibbonButton key={j}><Han>带</Han>(<u>B</u>)...</RibbonButton>
          ) : (
            <SideLine key={j}>
              <ToolButton title={tool.label} aria-label={tool.label}><Icon name={tool.icon} /></ToolButton>
              {tool.drop && <Arrow d="right" />}
            </SideLine>
          )
        )}
      </SideGroup>
    ))}
  </SideColumn>
);

export default function App() {
  return (
    <Page>
      <Global />
      <AppWindow>
        <TitleBar>
          <Icon name="block" size={14} />
          <Title><Mixed>PRT0001 (活动的) - Pro/ENGINEER Wildfire 4.0</Mixed></Title>
          <CaptionGroup>
            <CaptionButton aria-label="最小化"><Svg $size={9} viewBox="0 0 9 9"><path d="M1 7h5v2h-5z" fill="#000" /></Svg></CaptionButton>
            <CaptionButton aria-label="最大化"><Svg $size={9} viewBox="0 0 9 9"><path d="M.5 1h8v7.500h-8z" stroke="#000" fill="none" /><path d="M0 0h9v2h-9z" fill="#000" /></Svg></CaptionButton>
            <CaptionButton aria-label="关闭"><Svg $size={9} viewBox="0 0 9 9"><path d="M1 1l7 7M8 1l-7 7" stroke="#000" strokeWidth="1.600" /></Svg></CaptionButton>
          </CaptionGroup>
        </TitleBar>

        <MenuBar>
          {menus.map(([name, key]) => (
            <MenuButton key={name}><Han>{name}</Han>(<u>{key}</u>)</MenuButton>
          ))}
        </MenuBar>

        <ToolbarRow>
          {toolbars.map((group, i) => (
            <ToolGroup key={i}>
              <Grip />
              {group.map((tool) => (
                <React.Fragment key={tool.icon}>
                  <ToolButton $look={tool.look} title={tool.label} aria-label={tool.label}><Icon name={tool.icon} /></ToolButton>
                  {tool.drop && <DropButton aria-label="选取选项"><Arrow d="down" /></DropButton>}
                </React.Fragment>
              ))}
            </ToolGroup>
          ))}
        </ToolbarRow>

        <WorkArea>
          <Navigator>
            <Tabs>
              <Tab $active aria-label="模型树"><Icon name="modelTree" /></Tab>
              <Tab aria-label="文件夹浏览器"><Icon name="folders" /></Tab>
              <Tab aria-label="收藏夹"><Icon name="favorites" /></Tab>
              <Tab aria-label="连接"><Icon name="tools" /></Tab>
            </Tabs>
            <TabPage>
              <ButtonRow>
                <TreeMenuButton><span><Han>显示</Han> (<u>O</u>)</span><Arrow d="down" /></TreeMenuButton>
                <TreeMenuButton><span><Han>设置</Han> (<u>G</u>)</span><Arrow d="down" /></TreeMenuButton>
              </ButtonRow>
              <TreePane>
                <TreeHead />
                <TreeList>
                  <TreeRow $root><Icon name="part" size={16} />PRT0001.PRT</TreeRow>
                  {nodes.map((n, i) => (
                    <TreeRow key={i} $off={n.off}>
                      <Guide $last={i === nodes.length - 1}>{n.expand && <Expander aria-label="展开" />}</Guide>
                      <NodeBox $off={n.off}><Icon name={n.icon} size={16} /></NodeBox>
                      <span><Mixed>{n.text}</Mixed></span>
                    </TreeRow>
                  ))}
                </TreeList>
              </TreePane>
            </TabPage>
          </Navigator>
          <Splitter>
            <SashColumn $side="left"><SashButton aria-label="收起导航器"><Arrow d="left" /></SashButton></SashColumn>
            <SashColumn $side="right"><SashButton aria-label="展开浏览器"><Arrow d="right" /></SashButton></SashColumn>
          </Splitter>
          <Viewport><Model /></Viewport>
          <SideTools groups={leftSide} wide />
          <SideTools groups={rightSide} />
        </WorkArea>

        <MessageArea>
          <MessageList>
            {messages.map((m, i) => (
              <Message key={m}>
                <MessageMark>{i === 0 ? <Icon name="conflict" size={12} /> : <Bullet />}</MessageMark>
                <span><Mixed>{m}</Mixed></span>
              </Message>
            ))}
          </MessageList>
          <ScrollBar>
            <ScrollButton aria-label="向上滚动"><Arrow d="up" /></ScrollButton>
            <ScrollTrack><ScrollThumb /></ScrollTrack>
            <ScrollButton aria-label="向下滚动"><Arrow d="down" /></ScrollButton>
          </ScrollBar>
        </MessageArea>

        <StatusBar>
          <StatusCell $w={280}>
            <FilterBox>
              <FilterSelect aria-label="选取过滤器" defaultValue="feature">
                <option value="feature">特征</option>
              </FilterSelect>
              <FilterArrow><Arrow d="down" /></FilterArrow>
            </FilterBox>
          </StatusCell>
          <LightCell $w={58}><Icon name="light" /></LightCell>
        </StatusBar>
      </AppWindow>

      <TaskBar>
        <StartButton><Icon name="windows" size={16} /><Han>开始</Han></StartButton>
        <QuickLaunch>
          {["desktop", "media", "bird"].map((n) => (
            <QuickButton key={n} aria-label={n}><Icon name={n} size={16} /></QuickButton>
          ))}
        </QuickLaunch>
        <TaskList>
          {tasks.map((task) => (
            <TaskButton key={task.text} $active={task.active}>
              <Icon name={task.icon} size={16} />
              <span><Mixed>{task.text}</Mixed></span>
            </TaskButton>
          ))}
        </TaskList>
        <Icon name="keyboard" size={16} />
        <Tray>
          <TrayMore aria-label="显示隐藏的图标">«</TrayMore>
          {["snail", "kaspersky", "noise", "penguin", "network", "networkWarn"].map((n) => (
            <Icon key={n} name={n} size={16} />
          ))}
          <Clock>15:13</Clock>
        </Tray>
      </TaskBar>
    </Page>
  );
}
